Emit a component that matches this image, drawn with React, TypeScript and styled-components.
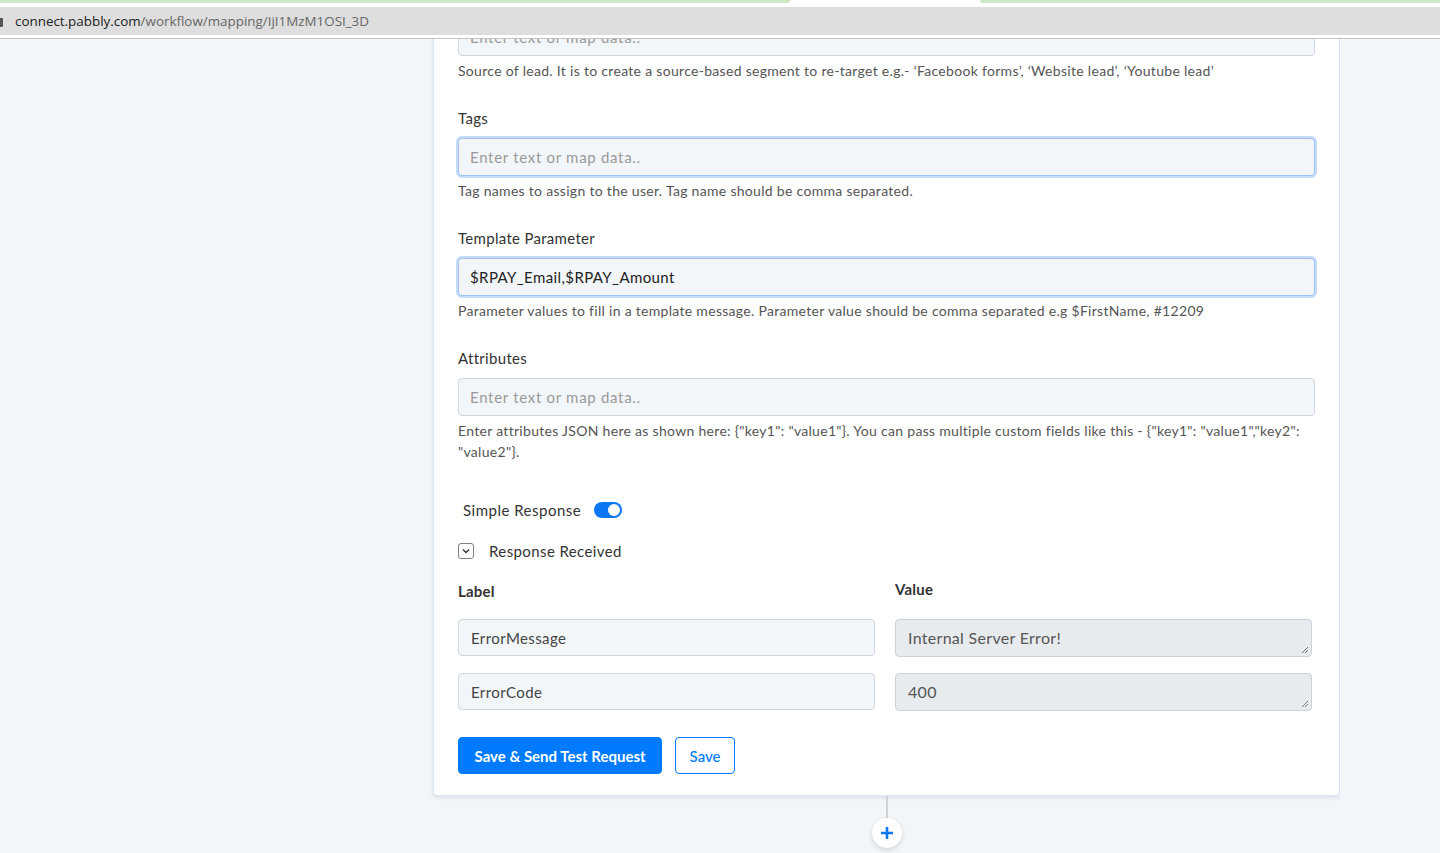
import React from 'react';
import styled, { createGlobalStyle } from 'styled-components';

const GlobalStyle = createGlobalStyle`
  html, body {
    margin: 0;
    padding: 0;
    height: 100%;
    background: #f3f6f9;
  }
  body {
    font-family: Lato, 'Open Sans', sans-serif;
    color: #333;
  }
  #root {
    height: 100%;
  }
`;

const Page = styled.div`
  display: flex;
  flex-direction: column;
  height: 853px;
  overflow: hidden;
`;

const TabStrip = styled.div`
  display: grid;
  grid-template-columns: 790px 1fr 460px;
  height: 7px;
  background: #fff;
`;

const TabEdge = styled.div<{ $round: 'left' | 'right' }>`
  height: 3px;
  background: #cde8c3;
  border-bottom-${(p) => (p.$round === 'left' ? 'right' : 'left')}-radius: 4px;
`;

const AddressBar = styled.div`
  display: flex;
  align-items: center;
  gap: 12px;
  height: 28px;
  background: #dedede;
  font-family: 'Open Sans', 'Noto Sans', sans-serif;
  font-size: 13.4px;
`;

const Lock = styled.span`
  width: 3px;
  height: 9px;
  margin-top: 2px;
  background: #555;
  border-radius: 0 1px 1px 0;
`;

const Host = styled.span`
  color: #222;
`;

const Path = styled.span`
  color: #666;
`;

const ChromeRule = styled.div`
  height: 3px;
  background: #fff;
  border-bottom: 1px solid #c4c4c4;
`;

const Canvas = styled.main`
  flex: 1;
  overflow: hidden;
  padding-left: 433px;
  width: 907px;
`;

const Card = styled.section`
  margin-top: -77px;
  background: #fff;
  border: 1px solid #dbe4f3;
  border-radius: 4px;
  box-shadow: 0 2px 4px rgba(40, 70, 130, 0.12);
  padding: 24px 24px 21px;
`;

const Field = styled.div`
  margin-bottom: 26px;
`;

const Label = styled.div`
  font-size: 15px;
  line-height: 22px;
  letter-spacing: 0.3px;
  color: #333;
  margin-bottom: 9px;
`;

const Input = styled.div<{ $focused?: boolean; $filled?: boolean }>`
  box-sizing: border-box;
  height: 38px;
  display: flex;
  align-items: center;
  padding: 0 11px;
  background: #f3f6f9;
  border: 1px solid ${(p) => (p.$focused ? '#9ec3f0' : '#cfd6de')};
  border-radius: 4px;
  box-shadow: ${(p) => (p.$focused ? '0 0 0 2px #c4dcf8' : 'none')};
  font-size: 15px;
  letter-spacing: ${(p) => (p.$filled ? '0.4px' : '0.7px')};
  color: ${(p) => (p.$filled ? '#222' : '#9a9a9a')};
  white-space: nowrap;
`;

const Help = styled.p`
  margin: 4px 0 0;
  font-size: 14px;
  line-height: 21px;
  letter-spacing: 0.3px;
  color: #555;
`;

const ToggleRow = styled.div`
  display: flex;
  align-items: center;
  gap: 13px;
  height: 22px;
  margin: 37px 0 19px 5px;
  font-size: 15px;
  letter-spacing: 0.5px;
  color: #333;
`;

const Switch = styled.span<{ $on: boolean }>`
  position: relative;
  width: 28px;
  height: 16px;
  border-radius: 8px;
  background: ${(p) => (p.$on ? '#0b77f3' : '#ccc')};

  &::after {
    content: '';
    position: absolute;
    top: 2px;
    left: ${(p) => (p.$on ? '14px' : '2px')};
    width: 12px;
    height: 12px;
    border-radius: 50%;
    background: #fff;
  }
`;

const CollapseRow = styled.div`
  display: flex;
  align-items: center;
  gap: 15px;
  height: 22px;
  margin-bottom: 18px;
  font-size: 15px;
  letter-spacing: 0.4px;
  color: #333;
`;

const ChevronBox = styled.span`
  box-sizing: border-box;
  width: 16px;
  height: 16px;
  border: 1px solid #7a8088;
  border-radius: 3px;
  display: flex;
  align-items: center;
  justify-content: center;
`;

const Grid = styled.div`
  display: grid;
  grid-template-columns: 417px 417px;
  column-gap: 20px;
  row-gap: 16px;
`;

const ColHead = styled.div<{ $lift?: boolean }>`
  font-size: 15px;
  font-weight: 700;
  line-height: 22px;
  letter-spacing: 0.2px;
  color: #333;
  margin-top: ${(p) => (p.$lift ? '-2px' : '0')};
  margin-bottom: ${(p) => (p.$lift ? '3px' : '1px')};
`;

const KeyBox = styled.div`
  box-sizing: border-box;
  height: 37px;
  display: flex;
  align-items: center;
  padding: 0 12px;
  background: #f3f6f9;
  border: 1px solid #cfd6de;
  border-radius: 4px;
  font-size: 15px;
  letter-spacing: 0.4px;
  color: #444;
`;

const ValueBox = styled.div`
  position: relative;
  box-sizing: border-box;
  height: 38px;
  padding: 7px 12px;
  background: #e8ebee;
  border: 1px solid #cdd2d8;
  border-radius: 4px;
  font-size: 16px;
  line-height: 22px;
  letter-spacing: 0.3px;
  color: #555;
`;

const Grip = styled.svg`
  position: absolute;
  right: 2px;
  bottom: 2px;
`;

const Actions = styled.div`
  display: flex;
  gap: 13px;
  margin-top: 26px;
`;

const Button = styled.button<{ $outline?: boolean }>`
  box-sizing: border-box;
  height: 37px;
  padding: 0 ${(p) => (p.$outline ? '13.5px' : '15.5px')};
  border-radius: 4px;
  border: 1px solid #007bff;
  background: ${(p) => (p.$outline ? '#fff' : '#007bff')};
  color: ${(p) => (p.$outline ? '#007bff' : '#fff')};
  font-family: Lato, sans-serif;
  font-size: 15px;
  font-weight: ${(p) => (p.$outline ? 500 : 700)};
  cursor: pointer;
`;

const Connector = styled.div`
  display: flex;
  flex-direction: column;
  align-items: center;
`;

const Stem = styled.div`
  width: 2px;
  height: 22px;
  background: #cfd3d8;
`;

const AddButton = styled.div`
  width: 30px;
  height: 30px;
  border-radius: 50%;
  background: #fff;
  box-shadow: 0 2px 5px rgba(0, 0, 0, 0.14);
  display: flex;
  align-items: center;
  justify-content: center;
`;

interface IField {
  label: string;
  value?: string;
  focused?: boolean;
  help: string;
}

const fields: IField[] = [
  {
    label: 'Source',
    help: 'Source of lead. It is to create a source-based segment to re-target e.g.- ‘Facebook forms’, ‘Website lead’, ‘Youtube lead’',
  },
  {
    label: 'Tags',
    focused: true,
    help: 'Tag names to assign to the user. Tag name should be comma separated.',
  },
  {
    label: 'Template Parameter',
    value: '$RPAY_Email,$RPAY_Amount',
    focused: true,
    help: 'Parameter values to fill in a template message. Parameter value should be comma separated e.g $FirstName, #12209',
  },
  {
    label: 'Attributes',
    help: 'Enter attributes JSON here as shown here: {"key1": "value1"}. You can pass multiple custom fields like this - {"key1": "value1","key2": "value2"}.',
  },
];

const responses = [
  { key: 'ErrorMessage', value: 'Internal Server Error!' },
  { key: 'ErrorCode', value: '400' },
];

const App: React.FC = () => (
  <>
    <GlobalStyle />
    <Page>
      <TabStrip>
        <TabEdge $round="left" />
        <div />
        <TabEdge $round="right" />
      </TabStrip>
      <AddressBar>
        <Lock />
        <span>
          <Host>connect.pabbly.com</Host>
          <Path>/workflow/mapping/IjI1MzM1OSI_3D</Path>
        </span>
      </AddressBar>
      <ChromeRule />
      <Canvas>
        <Card>
          {fields.map((f) => (
            <Field key={f.label}>
              <Label>{f.label}</Label>
              <Input $focused={f.focused} $filled={!!f.value}>
                {f.value || 'Enter text or map data..'}
              </Input>
              <Help>{f.help}</Help>
            </Field>
          ))}
          <ToggleRow>
            Simple Response
            <Switch $on />
          </ToggleRow>
          <CollapseRow>
            <ChevronBox>
              <svg width="8" height="6" viewBox="0 0 8 6">
                <path d="M1 1.5 L4 4.5 L7 1.5" fill="none" stroke="#333" strokeWidth="1.4" />
              </svg>
            </ChevronBox>
            Response Received
          </CollapseRow>
          <Grid>
            <ColHead>Label</ColHead>
            <ColHead $lift>Value</ColHead>
            {responses.map((r) => (
              <React.Fragment key={r.key}>
                <KeyBox>{r.key}</KeyBox>
                <ValueBox>
                  {r.value}
                  <Grip width="8" height="8" viewBox="0 0 8 8">
                    <path d="M7 1 L1 7 M7 4 L4 7" stroke="#777" strokeWidth="1" />
                  </Grip>
                </ValueBox>
              </React.Fragment>
            ))}
          </Grid>
          <Actions>
            <Button>Save &amp; Send Test Request</Button>
            <Button $outline>Save</Button>
          </Actions>
        </Card>
        <Connector>
          <Stem />
          <AddButton>
            <svg width="14" height="14" viewBox="0 0 14 14">
              <path d="M7 1 V13 M1 7 H13" stroke="#0b77f3" strokeWidth="2.6" />
            </svg>
          </AddButton>
        </Connector>
      </Canvas>
    </Page>
  </>
);

export default App;
